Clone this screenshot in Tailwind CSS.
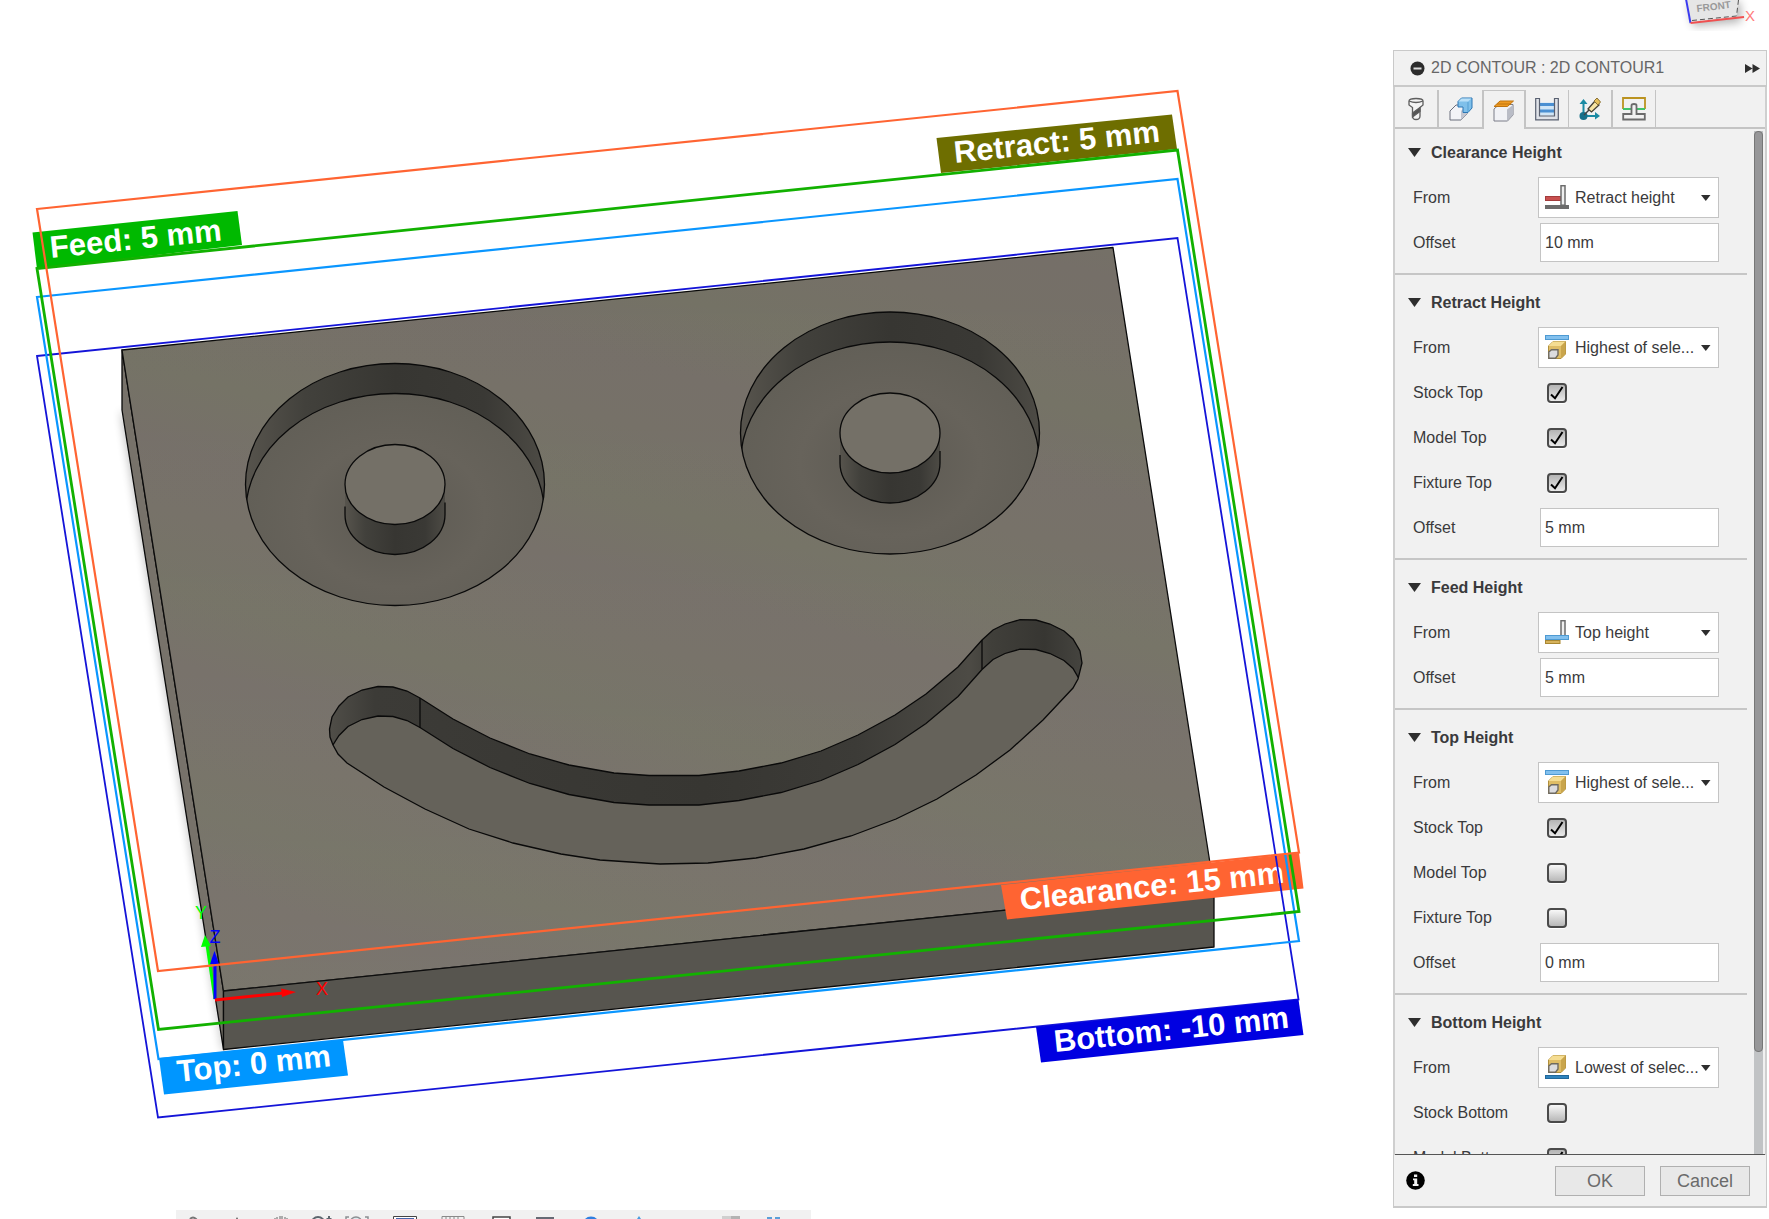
<!DOCTYPE html>
<html lang="en">
<head>
<meta charset="utf-8">
<title>2D Contour</title>
<script src="https://cdn.jsdelivr.net/npm/@tailwindcss/browser@4"></script>
</head>
<body class="bg-white font-['Liberation_Sans',Arial,sans-serif] text-base text-[#3a3a3c]">

<!-- shared icons -->
<svg class="hidden" aria-hidden="true">
  <symbol id="i-retract" viewBox="0 0 24 24">
    <rect x="0.5" y="11.5" width="15" height="4" fill="#c9504f" stroke="#a33c3c"/>
    <rect x="16" y="0.7" width="4" height="19.5" fill="#efefef" stroke="#6c6c6c" stroke-width="1.5"/>
    <rect x="0" y="20" width="24" height="4" fill="#6b6b6b"/>
  </symbol>
  <symbol id="i-top" viewBox="0 0 24 24">
    <rect x="16" y="0.7" width="4" height="16" fill="#efefef" stroke="#6c6c6c" stroke-width="1.5"/>
    <rect x="0.5" y="15.5" width="23" height="4" fill="#82c0ee" stroke="#4e9ad2"/>
    <rect x="0.5" y="20.5" width="14.5" height="3" fill="#d6b25c" stroke="#a98731"/>
  </symbol>
  <symbol id="i-block" viewBox="0 0 18 18">
    <path d="M0.5 5 L5 0.5 H17.5 V13 L13 17.5 H0.5Z" fill="#dfbd66" stroke="#b08f3c"/>
    <path d="M0.5 5 L5 0.5 H17.5 L13 5Z" fill="#f5dd92"/>
    <path d="M13 5 L17.5 0.5 V13 L13 17.5Z" fill="#c9a54c"/>
    <path d="M0.8 11 L3.5 8.7 H10 V14 L7.5 17.2 H0.8Z" fill="#dcdcdf" stroke="#6f6a60" stroke-width="1.4"/>
  </symbol>
  <symbol id="i-highest" viewBox="0 0 24 24">
    <rect x="0.5" y="0.5" width="23" height="4" fill="#82c0ee" stroke="#4e9ad2"/>
    <use href="#i-block" x="3" y="6" width="18" height="18"/>
  </symbol>
  <symbol id="i-lowest" viewBox="0 0 24 24">
    <use href="#i-block" x="3" y="0" width="18" height="18"/>
    <rect x="0.5" y="20.5" width="23" height="3" fill="#2f83bd" stroke="#20689b"/>
  </symbol>
  <symbol id="i-check" viewBox="0 0 20 20">
    <path d="M4 11.5 L8 15.2 L15.5 4" fill="none" stroke="#000" stroke-width="2"/>
  </symbol>
  <symbol id="i-caret" viewBox="0 0 10 6"><path d="M0 0 H9.5 L4.8 6Z" fill="#2e2e2e"/></symbol>
  <symbol id="i-fold" viewBox="0 0 13 9"><path d="M0 0 H13 L6.5 9Z" fill="#2e2e2e"/></symbol>
</svg>

<div class="flex h-screen overflow-hidden">

  <!-- modelling canvas -->
  <main class="flex min-w-0 flex-1 flex-col">
    <svg class="block min-h-0 w-full flex-1" viewBox="0 0 1393 1210" preserveAspectRatio="xMinYMin meet" role="img" aria-label="Stock with height planes">
      <defs>
        <linearGradient id="band" gradientUnits="userSpaceOnUse" x1="60" y1="200" x2="4" y2="400" spreadMethod="repeat">
          <stop offset="0" stop-color="#756f68"/><stop offset=".3" stop-color="#757067"/>
          <stop offset=".65" stop-color="#747265"/><stop offset="1" stop-color="#756f68"/>
        </linearGradient>
        <linearGradient id="lift" x1="0" y1="0" x2="0" y2="1">
          <stop offset="0" stop-color="#fff" stop-opacity="0"/><stop offset="1" stop-color="#fff" stop-opacity=".04"/>
        </linearGradient>
        <linearGradient id="wall" x1="0" y1="0" x2="1" y2="0">
          <stop offset="0" stop-color="#57544d"/><stop offset=".2" stop-color="#42413c"/><stop offset=".5" stop-color="#373632"/>
          <stop offset=".8" stop-color="#3a3935"/><stop offset="1" stop-color="#4d4b45"/>
        </linearGradient>
        <linearGradient id="groove" x1="0" y1="0" x2="1" y2="0">
          <stop offset="0" stop-color="#504e48"/><stop offset=".06" stop-color="#3c3b37"/><stop offset=".5" stop-color="#373632"/>
          <stop offset=".7" stop-color="#3c3b37"/><stop offset=".85" stop-color="#4d4b45"/><stop offset=".88" stop-color="#403f3a"/><stop offset=".95" stop-color="#373632"/><stop offset="1" stop-color="#45443f"/>
        </linearGradient>
        <radialGradient id="floor"><stop offset="0" stop-color="#5c5952"/><stop offset=".6" stop-color="#67635b"/><stop offset="1" stop-color="#625f57"/></radialGradient>
        <filter id="soft" x="-20%" y="-20%" width="140%" height="140%"><feGaussianBlur stdDeviation="5"/></filter>
        <ellipse id="rim" cx="0" cy="0" rx="149.5" ry="121"/>
        <clipPath id="rimClip"><use href="#rim"/></clipPath>
        <path id="smile" d="M420 698 L407 691 L393 687 L378 686.500 L362 690 L348 697 L339 706 L332 717 L329.500 729 L330 737 L333 745 L338 754 L347 763 L384 787 L425 809 L469 829 L513 843 L561 854 L600 860 L660 864 L708 863 L756 858 L804 849 L851 836 L896 819 L937 799 L976 775 L1010 750 L1043 720 L1073 688 L1078 679 L1082 663 L1080 651 L1073 639 L1064 631 L1050 624 L1036 620 L1020 619.700 L1005 624 L993 630 L982 640 L958 667 L926 694 L895 715 L858 735 L821 751 L781 763 L739 771 L699 775.500 L649 775.500 L614 773 L569 765 L530 754 L490 738 L453 719 Z"/>
        <clipPath id="smileClip"><use href="#smile"/></clipPath>
        <g id="eye">
          <use href="#rim" fill="url(#wall)"/>
          <g clip-path="url(#rimClip)"><use href="#rim" y="30" fill="url(#floor)" stroke="#0a0a0a" stroke-width="1.3"/></g>
          <use href="#rim" fill="none" stroke="#0a0a0a" stroke-width="1.3"/>
          <path d="M-50 5 V30 A50 40 0 0 0 50 30 V5Z" fill="url(#wall)" />
          <path d="M-50 22 V30 A50 40 0 0 0 50 30 V18" fill="none" stroke="#0a0a0a" stroke-width="1.3"/>
          <ellipse rx="50" ry="40" fill="#747067" stroke="#0a0a0a" stroke-width="1.3"/>
        </g>
      </defs>

      <!-- stock body -->
      <path d="M121 410 L223 1050 L228 1050 L130 420Z" fill="#000" opacity=".3" filter="url(#soft)"/>
      <g stroke="#0a0a0a" stroke-width="1.3" stroke-linejoin="round">
        <path d="M122 350 L223.500 991 V1049.500 L122 410Z" fill="#77726a"/>
        <path d="M122 350 L1113 247.500 L1214 888.500 L223.500 991Z" fill="url(#band)"/>
        <path d="M223.500 991 L1214 888.500 V947 L223.500 1049.500Z" fill="#57554f"/>
      </g>
      <path d="M122 350 L1113 247.500 L1214 888.500 L223.500 991Z" fill="url(#lift)"/>

      <use href="#eye" x="395" y="484.500"/>
      <use href="#eye" x="890" y="433"/>

      <use href="#smile" fill="url(#groove)"/>
      <g clip-path="url(#smileClip)"><use href="#smile" y="29.500" fill="#65625a" stroke="#0a0a0a" stroke-width="1.3"/></g>
      <use href="#smile" fill="none" stroke="#0a0a0a" stroke-width="1.3"/>
      <path d="M420 698 V728 M982 640 V669" stroke="#0a0a0a" stroke-width="1.300"/>

      <!-- origin triad -->
      <g stroke-width="3" fill="none">
        <path d="M215 999 L207 945" stroke="#0f0"/><path d="M201 947 L205 935 L211 946Z" fill="#0f0" stroke="none"/>
        <path d="M215 999 V962" stroke="#00f"/><path d="M210 964 L214.500 951 L219 964Z" fill="#00f" stroke="none"/>
        <path d="M215 1000 L284 993" stroke="#f00"/><path d="M281 988.500 L296 992 L282 997Z" fill="#f00" stroke="none"/>
      </g>
      <g font-size="18" text-anchor="middle">
        <text x="201" y="919" fill="#0f0">Y</text><text x="215" y="943" fill="#00f">Z</text><text x="322" y="995" fill="#f00">X</text>
      </g>

      <!-- height planes and their tags -->
      <g font-size="31" font-weight="700" fill="#fff">
        <path d="M1001 885 L1299 853 L1303.500 888.500 L1007 919.500Z" fill="#ff6432"/>
        <text transform="translate(1021 910) rotate(-5.900)">Clearance: 15 mm</text>
        <path d="M37 356 L1177.500 238 L1298.500 999.500 L158 1117.500Z" fill="none" stroke="#1414d8" stroke-width="1.800"/>
        <path d="M1036 1027 L1298.500 999.500 L1303.500 1035 L1041 1062.500Z" fill="#0000e1"/>
        <text transform="translate(1055 1052) rotate(-5.900)">Bottom: -10 mm</text>
        <path d="M37 297 L1177.500 179 L1299 941 L158.500 1059Z" fill="none" stroke="#0a96ff" stroke-width="2.200"/>
        <path d="M159 1058 L343 1040 L348 1075.500 L164 1094.500Z" fill="#0096ff"/>
        <text transform="translate(178 1082) rotate(-5.900)">Top: 0 mm</text>
        <path d="M936.500 138 L1172 114.500 L1177 149 L941 173Z" fill="#6e6e00"/>
        <text transform="translate(955 163) rotate(-5.900)">Retract: 5 mm</text>
        <path d="M32.500 232.500 L237.500 211 L242 245 L37 269Z" fill="#00b900"/>
        <text transform="translate(51 258) rotate(-5.900)">Feed: 5 mm</text>
        <path d="M37 268.500 L1177.500 150 L1299 911.500 L158.500 1029.500Z" fill="none" stroke="#12b100" stroke-width="2.800"/>
        <path d="M37 209 L1177.500 91 L1299 852.500 L158 971Z" fill="none" stroke="#ff6432" stroke-width="2.200"/>
      </g>
    </svg>

    <!-- navigation bar -->
    <nav aria-label="Navigation" class="ml-[176px] flex h-[9px] w-[635px] shrink-0 items-start overflow-hidden bg-[#f1f1f1] pl-[5px] pt-1.5">
      <button aria-label="Home" class="h-6 w-6 shrink-0"><svg viewBox="0 0 24 24" class="h-6 w-6" fill="none" stroke="#777" stroke-width="2"><path d="M9 3 Q12 0 15 3 L20 9"/></svg></button>
      <button aria-label="Orbit" class="ml-5 h-6 w-6 shrink-0"><svg viewBox="0 0 24 24" class="h-6 w-6"><path d="M12 1 L14 5 H10Z" fill="#555"/></svg></button>
      <button aria-label="Pan" class="ml-5 h-6 w-6 shrink-0"><svg viewBox="0 0 24 24" class="h-6 w-6" fill="none" stroke="#666"><path d="M6 6 V2 M8 6 V1 M11 6 V0 M13 6 V0 M16 6 V1 M18 6 V2"/></svg></button>
      <button aria-label="Zoom" class="ml-4 h-6 w-6 shrink-0"><svg viewBox="0 0 24 24" class="h-6 w-6" fill="none" stroke="#5d666e" stroke-width="2"><circle cx="9" cy="7.500" r="6.500"/><path d="M20 0 V8 M17.500 3 H22.500"/></svg></button>
      <button aria-label="Fit" class="ml-3 h-6 w-6 shrink-0"><svg viewBox="0 0 24 24" class="h-6 w-6" fill="none" stroke="#8b8f92" stroke-width="1.500"><path d="M1 5 V1 H4 M20 1 H23 V5"/><circle cx="11" cy="7" r="6" fill="#dce8ec"/></svg></button>
      <button aria-label="Display" class="ml-6 h-6 w-6 shrink-0"><svg viewBox="0 0 24 24" class="h-6 w-6"><path d="M.5 .5 H23.500 V16 H.5Z" fill="#fff" stroke="#444"/><rect x="3" y="2" width="18" height="12" fill="#4667ad"/></svg></button>
      <button aria-label="Grid" class="ml-6 h-6 w-6 shrink-0"><svg viewBox="0 0 24 24" class="h-6 w-6" fill="none" stroke="#8a8a8a"><path d="M1 .5 H23 V16 H1Z M5 0 V16 M9 0 V16 M13 0 V16 M17 0 V16"/></svg></button>
      <button aria-label="Viewports" class="ml-6 h-6 w-6 shrink-0"><svg viewBox="0 0 24 24" class="h-6 w-6" fill="#fff" stroke="#444" stroke-width="1.500"><path d="M4 1 H21 V16 H4Z"/></svg></button>
      <button aria-label="Layout" class="ml-5 h-6 w-6 shrink-0"><svg viewBox="0 0 24 24" class="h-6 w-6"><rect x="3" y="1" width="18" height="14" fill="#666b75"/></svg></button>
      <button aria-label="Simulate" class="ml-[22px] h-6 w-6 shrink-0"><svg viewBox="0 0 24 24" class="h-6 w-6"><circle cx="12" cy="9" r="8.500" fill="#2f7fe0"/></svg></button>
      <button aria-label="Drop" class="ml-6 h-6 w-6 shrink-0"><svg viewBox="0 0 24 24" class="h-6 w-6"><path d="M12 0 L16 6 H8Z" fill="#4a9be0"/></svg></button>
      <button aria-label="Material" class="ml-[68px] h-6 w-6 shrink-0"><svg viewBox="0 0 24 24" class="h-6 w-6"><rect x="3" width="9" height="9" fill="#cfcfcf"/><rect x="12" width="9" height="9" fill="#b3b3b3"/></svg></button>
      <button aria-label="More" class="ml-[18px] h-6 w-6 shrink-0"><svg viewBox="0 0 24 24" class="h-6 w-6"><path d="M6 1 H11 V4 H6Z M14 1 H19 V4 H14Z" fill="#5c9fd8"/></svg></button>
    </nav>
  </main>

  <!-- right column: view cube above the operation dialog -->
  <div class="mr-0.5 flex w-[374px] shrink-0 flex-col pb-[11px]">
    <div class="flex h-[50px] shrink-0 justify-end">
      <svg class="h-[50px] w-[100px]" viewBox="0 0 100 50" role="img" aria-label="View cube, front">
        <path d="M21 2 L26 26 L74 22 L73 2Z" fill="#000" opacity=".3" filter="url(#soft)"/>
        <path d="M19 0 L23.500 23 L69.500 17 L71.500 0Z" fill="#e6e6e6"/>
        <path d="M25 20.500 L69.500 16 L71.500 0" fill="none" stroke="#555" stroke-dasharray="5 3"/>
        <path d="M19 -1 L23.500 23" stroke="#3a3af0" stroke-width="2"/>
        <path d="M23.500 23 L77 17" stroke="#f05050" stroke-width="2"/>
        <text transform="translate(30 12) rotate(-7)" font-size="10" font-weight="700" fill="#999">FRONT</text>
        <text x="78" y="21" font-size="15" fill="#ff7b7b">X</text>
      </svg>
    </div>

    <aside class="flex min-h-0 flex-1 flex-col bg-[#f1f1f1]">
      <header class="flex h-[37px] shrink-0 items-center border-x border-t border-b-2 border-[#c9c9c9] pl-4 pr-1.5">
        <button aria-label="Collapse" class="h-[15px] w-[15px]"><svg viewBox="0 0 15 15" class="h-[15px] w-[15px]"><circle cx="7.500" cy="7.500" r="7" fill="#2c2c2c"/><path d="M3.500 7.500 H11.500" stroke="#ddd" stroke-width="2"/></svg></button>
        <h1 class="ml-1.5 flex-1 text-[#666]">2D CONTOUR : 2D CONTOUR1</h1>
        <button aria-label="Dock" class="h-[9px] w-[15px]"><svg viewBox="0 0 15 9" class="h-[9px] w-[15px]"><path d="M0 0 L7.500 4.500 L0 9Z M7.500 0 L15 4.500 L7.500 9Z" fill="#2e2e2e"/></svg></button>
      </header>

      <div class="flex min-h-0 flex-1 flex-col border-x-2 border-[#cfcfcf]">
        <div role="tablist" class="flex h-[42px] shrink-0 items-stretch pt-[3px]">
          <button role="tab" aria-label="Tool" class="flex w-11 items-center justify-center border-r-2 border-b-2 border-[#c4c4c4]">
            <svg class="h-6 w-6" viewBox="0 0 24 24" stroke="#5e5e5e" stroke-width="1.300">
              <path d="M5 4 Q5 1.500 12 1.500 Q19 1.500 19 4 V8 L16 10.500 V19 Q16 22.500 12 22.500 Q8.500 22.500 8.500 19 V10.500 L5 8Z" fill="#f4f4f4"/>
              <path d="M5 4 Q12 7 19 4" fill="none"/><path d="M8.500 16 L16 10.500 V14.500 L8.500 20Z" fill="#555"/></svg>
          </button>
          <button role="tab" aria-label="Geometry" class="flex w-[43px] items-center justify-center border-b-2 border-[#c4c4c4]">
            <svg class="h-6 w-6" viewBox="0 0 24 24">
              <path d="M1 14 L7 8 H18 V17 L12 23 H1Z" fill="#f2f3f7" stroke="#6a6e7c"/><path d="M12 14 L18 8 V17 L12 23Z" fill="#c3c6d0"/>
              <path d="M9 4.500 L12.500 1 H23 V11 L19 15.500 H14 V10 H9Z" fill="#7fc0ea" stroke="#2c77b4"/><path d="M9.500 4.500 L12.500 1.500 H22.500 L19 4.500Z" fill="#b9e0f8"/><path d="M19 5 V15" stroke="#559fd2"/></svg>
          </button>
          <button role="tab" aria-label="Heights" aria-selected="true" class="flex w-11 items-center justify-center border-x-2 border-t border-[#c4c4c4]">
            <svg class="h-6 w-6" viewBox="0 0 24 24">
              <path d="M2 11 L7 6.500 H21 V17 L15.500 23 H2Z" fill="#f1f2f6" stroke="#7a7d88"/><path d="M15 11.500 L21 7 V17 L15 23Z" fill="#b9bcc6"/>
              <path d="M2 8.500 L8 3 H21.500 L15.500 8.500Z" fill="#ee9a22" stroke="#bf7410"/><path d="M5 6 H19" stroke="#bf7410"/></svg>
          </button>
          <button role="tab" aria-label="Passes" class="flex w-[43px] items-center justify-center border-r border-b-2 border-[#c4c4c4]">
            <svg class="h-6 w-6" viewBox="0 0 24 24">
              <rect x="5" y="5.500" width="14" height="13" fill="#cfe5f7"/><path d="M5 7.500 H19 M5 14 H19" stroke="#4a8fd2" stroke-width="3"/>
              <path d="M.7 1.500 H4.500 V19 H19.500 V1.500 H23.300 V22.800 H.7Z" fill="#dfe2e8" stroke="#596070" stroke-width="1.200"/></svg>
          </button>
          <button role="tab" aria-label="Linking" class="flex w-11 items-center justify-center border-r-2 border-b-2 border-[#c4c4c4]">
            <svg class="h-6 w-6" viewBox="0 0 24 24">
              <path d="M5.500 19 V6 M5.500 19 H18" stroke="#1b8aa3" stroke-width="2"/><path d="M1.500 7 L5.500 2 L9.500 7Z M17 15 L22 19 L17 22.500Z" fill="#1b8aa3"/>
              <circle cx="5.500" cy="19" r="4" fill="#17708a"/><path d="M6 18 L12 12" stroke="#444" stroke-width="1.500"/>
              <path d="M10 12 L17 4 L21 8 L13.500 15Z" fill="#f6e3a2" stroke="#443f35" stroke-width="1.300"/><path d="M16 4 L19 1 L22.500 5 L20 8Z" fill="#e6c05c" stroke="#8a7134"/></svg>
          </button>
          <button role="tab" aria-label="Leads" class="flex w-[43px] items-center justify-center border-r border-b-2 border-[#c4c4c4]">
            <svg class="h-6 w-6" viewBox="0 0 24 24" fill="none" stroke-width="1.800">
              <path d="M1 12 V1 H23 V12" stroke="#bb9320"/><path d="M1 12 H9 M15 12 H23" stroke="#3fc46a"/>
              <path d="M1.200 17 H9.500 V8.500 Q9.500 7 12 7 Q14.500 7 14.500 8.500 V17 H22.800 V22.500 H1.200Z" stroke="#6b6b6b" fill="#f1f1f1"/></svg>
          </button>
          <div class="flex-1 border-b-2 border-[#c4c4c4]"></div>
        </div>

        <div class="flex min-h-0 flex-1 border-b border-[#555]">
          <form class="min-w-0 flex-1 overflow-hidden pt-px">

            <section class="mr-[7px] mb-[5px] border-b-2 border-[#c6c6c6] pb-2">
              <h2 class="flex h-[45px] items-center gap-2.5 pl-[13px] font-bold"><svg class="h-[9px] w-[13px]"><use href="#i-fold"/></svg>Clearance Height</h2>
              <div class="flex h-[45px] items-center pl-[18px]"><label for="c-from" class="w-[125px]">From</label>
                <div class="relative"><select id="c-from" class="h-[41px] w-[181px] appearance-none overflow-hidden border border-[#c4c4c4] bg-white pr-5 pl-9 text-clip whitespace-nowrap"><option>Retract height</option></select>
                  <svg class="pointer-events-none absolute top-2 left-[7px] h-6 w-6"><use href="#i-retract"/></svg><svg class="pointer-events-none absolute top-[18px] right-2 h-1.5 w-2.5"><use href="#i-caret"/></svg></div></div>
              <div class="flex h-[45px] items-center pl-[18px]"><label for="c-off" class="w-[127px]">Offset</label><input id="c-off" value="10 mm" class="h-[39px] w-[179px] border border-[#c4c4c4] bg-white px-1"></div>
            </section>

            <section class="mr-[7px] mb-[5px] border-b-2 border-[#c6c6c6] pb-2">
              <h2 class="flex h-[45px] items-center gap-2.5 pl-[13px] font-bold"><svg class="h-[9px] w-[13px]"><use href="#i-fold"/></svg>Retract Height</h2>
              <div class="flex h-[45px] items-center pl-[18px]"><label for="r-from" class="w-[125px]">From</label>
                <div class="relative"><select id="r-from" class="h-[41px] w-[181px] appearance-none overflow-hidden border border-[#c4c4c4] bg-white pr-5 pl-9 text-clip whitespace-nowrap"><option>Highest of sele...</option></select>
                  <svg class="pointer-events-none absolute top-2 left-[7px] h-6 w-6"><use href="#i-highest"/></svg><svg class="pointer-events-none absolute top-[18px] right-2 h-1.5 w-2.5"><use href="#i-caret"/></svg></div></div>
              <div class="flex h-[45px] items-center pl-[18px]"><label for="r-stock" class="w-[134px]">Stock Top</label><div class="relative h-5 w-5"><input id="r-stock" type="checkbox" checked class="peer block h-5 w-5 appearance-none rounded-[4px] border-2 border-[#4a4a4a] bg-linear-to-b from-[#f8f8f8] to-[#b8b8b8] shadow-[0_1px_0_#fff] checked:from-[#b4b4b4] checked:to-[#eaeaea]"><svg class="pointer-events-none absolute inset-0 hidden h-5 w-5 peer-checked:block"><use href="#i-check"/></svg></div></div>
              <div class="flex h-[45px] items-center pl-[18px]"><label for="r-model" class="w-[134px]">Model Top</label><div class="relative h-5 w-5"><input id="r-model" type="checkbox" checked class="peer block h-5 w-5 appearance-none rounded-[4px] border-2 border-[#4a4a4a] bg-linear-to-b from-[#f8f8f8] to-[#b8b8b8] shadow-[0_1px_0_#fff] checked:from-[#b4b4b4] checked:to-[#eaeaea]"><svg class="pointer-events-none absolute inset-0 hidden h-5 w-5 peer-checked:block"><use href="#i-check"/></svg></div></div>
              <div class="flex h-[45px] items-center pl-[18px]"><label for="r-fix" class="w-[134px]">Fixture Top</label><div class="relative h-5 w-5"><input id="r-fix" type="checkbox" checked class="peer block h-5 w-5 appearance-none rounded-[4px] border-2 border-[#4a4a4a] bg-linear-to-b from-[#f8f8f8] to-[#b8b8b8] shadow-[0_1px_0_#fff] checked:from-[#b4b4b4] checked:to-[#eaeaea]"><svg class="pointer-events-none absolute inset-0 hidden h-5 w-5 peer-checked:block"><use href="#i-check"/></svg></div></div>
              <div class="flex h-[45px] items-center pl-[18px]"><label for="r-off" class="w-[127px]">Offset</label><input id="r-off" value="5 mm" class="h-[39px] w-[179px] border border-[#c4c4c4] bg-white px-1"></div>
            </section>

            <section class="mr-[7px] mb-[5px] border-b-2 border-[#c6c6c6] pb-2">
              <h2 class="flex h-[45px] items-center gap-2.5 pl-[13px] font-bold"><svg class="h-[9px] w-[13px]"><use href="#i-fold"/></svg>Feed Height</h2>
              <div class="flex h-[45px] items-center pl-[18px]"><label for="f-from" class="w-[125px]">From</label>
                <div class="relative"><select id="f-from" class="h-[41px] w-[181px] appearance-none overflow-hidden border border-[#c4c4c4] bg-white pr-5 pl-9 text-clip whitespace-nowrap"><option>Top height</option></select>
                  <svg class="pointer-events-none absolute top-2 left-[7px] h-6 w-6"><use href="#i-top"/></svg><svg class="pointer-events-none absolute top-[18px] right-2 h-1.5 w-2.5"><use href="#i-caret"/></svg></div></div>
              <div class="flex h-[45px] items-center pl-[18px]"><label for="f-off" class="w-[127px]">Offset</label><input id="f-off" value="5 mm" class="h-[39px] w-[179px] border border-[#c4c4c4] bg-white px-1"></div>
            </section>

            <section class="mr-[7px] mb-[5px] border-b-2 border-[#c6c6c6] pb-2">
              <h2 class="flex h-[45px] items-center gap-2.5 pl-[13px] font-bold"><svg class="h-[9px] w-[13px]"><use href="#i-fold"/></svg>Top Height</h2>
              <div class="flex h-[45px] items-center pl-[18px]"><label for="t-from" class="w-[125px]">From</label>
                <div class="relative"><select id="t-from" class="h-[41px] w-[181px] appearance-none overflow-hidden border border-[#c4c4c4] bg-white pr-5 pl-9 text-clip whitespace-nowrap"><option>Highest of sele...</option></select>
                  <svg class="pointer-events-none absolute top-2 left-[7px] h-6 w-6"><use href="#i-highest"/></svg><svg class="pointer-events-none absolute top-[18px] right-2 h-1.5 w-2.5"><use href="#i-caret"/></svg></div></div>
              <div class="flex h-[45px] items-center pl-[18px]"><label for="t-stock" class="w-[134px]">Stock Top</label><div class="relative h-5 w-5"><input id="t-stock" type="checkbox" checked class="peer block h-5 w-5 appearance-none rounded-[4px] border-2 border-[#4a4a4a] bg-linear-to-b from-[#f8f8f8] to-[#b8b8b8] shadow-[0_1px_0_#fff] checked:from-[#b4b4b4] checked:to-[#eaeaea]"><svg class="pointer-events-none absolute inset-0 hidden h-5 w-5 peer-checked:block"><use href="#i-check"/></svg></div></div>
              <div class="flex h-[45px] items-center pl-[18px]"><label for="t-model" class="w-[134px]">Model Top</label><input id="t-model" type="checkbox" class="block h-5 w-5 appearance-none rounded-[4px] border-2 border-[#4a4a4a] bg-linear-to-b from-[#f8f8f8] to-[#b8b8b8] shadow-[0_1px_0_#fff]"></div>
              <div class="flex h-[45px] items-center pl-[18px]"><label for="t-fix" class="w-[134px]">Fixture Top</label><input id="t-fix" type="checkbox" class="block h-5 w-5 appearance-none rounded-[4px] border-2 border-[#4a4a4a] bg-linear-to-b from-[#f8f8f8] to-[#b8b8b8] shadow-[0_1px_0_#fff]"></div>
              <div class="flex h-[45px] items-center pl-[18px]"><label for="t-off" class="w-[127px]">Offset</label><input id="t-off" value="0 mm" class="h-[39px] w-[179px] border border-[#c4c4c4] bg-white px-1"></div>
            </section>

            <section class="mr-[7px]">
              <h2 class="flex h-[45px] items-center gap-2.5 pl-[13px] font-bold"><svg class="h-[9px] w-[13px]"><use href="#i-fold"/></svg>Bottom Height</h2>
              <div class="flex h-[45px] items-center pl-[18px]"><label for="b-from" class="w-[125px]">From</label>
                <div class="relative"><select id="b-from" class="h-[41px] w-[181px] appearance-none overflow-hidden border border-[#c4c4c4] bg-white pr-5 pl-9 text-clip whitespace-nowrap"><option>Lowest of selec...</option></select>
                  <svg class="pointer-events-none absolute top-2 left-[7px] h-6 w-6"><use href="#i-lowest"/></svg><svg class="pointer-events-none absolute top-[18px] right-2 h-1.5 w-2.5"><use href="#i-caret"/></svg></div></div>
              <div class="flex h-[45px] items-center pl-[18px]"><label for="b-stock" class="w-[134px]">Stock Bottom</label><input id="b-stock" type="checkbox" class="block h-5 w-5 appearance-none rounded-[4px] border-2 border-[#4a4a4a] bg-linear-to-b from-[#f8f8f8] to-[#b8b8b8] shadow-[0_1px_0_#fff]"></div>
              <div class="flex h-[45px] items-center pl-[18px]"><label for="b-model" class="w-[134px]">Model Bottom</label><div class="relative h-5 w-5"><input id="b-model" type="checkbox" checked class="peer block h-5 w-5 appearance-none rounded-[4px] border-2 border-[#4a4a4a] bg-linear-to-b from-[#f8f8f8] to-[#b8b8b8] shadow-[0_1px_0_#fff] checked:from-[#b4b4b4] checked:to-[#eaeaea]"><svg class="pointer-events-none absolute inset-0 hidden h-5 w-5 peer-checked:block"><use href="#i-check"/></svg></div></div>
            </section>
          </form>

          <!-- scroll track and thumb -->
          <div class="mt-0.5 mr-0.5 w-[9px] shrink-0 bg-[#c1c3c5]"><div class="h-[90%] rounded-[4px] border border-[#777] bg-[#979799]"></div></div>
        </div>
      </div>

      <footer class="flex h-[53px] shrink-0 items-center gap-[15px] border-x border-b-2 border-[#c9c9c9] pr-4 pl-3">
        <button aria-label="Info" class="mr-auto h-[19px] w-[19px]"><svg viewBox="0 0 19 19" class="h-[19px] w-[19px]"><circle cx="9.500" cy="9.500" r="9.300" fill="#000"/><path d="M8 3.500 H11.200 V6 H8Z M7 7.500 H11.200 V13 H12.500 V15 H6.800 V13 H8.200 V9.300 H7Z" fill="#f1f1f1"/></svg></button>
        <button class="h-[30px] w-[90px] border border-[#b0b0b0] bg-[#e8e8e8] text-lg leading-none text-[#6b6b6b]">OK</button>
        <button class="h-[30px] w-[90px] border border-[#b0b0b0] bg-[#e8e8e8] text-lg leading-none text-[#6b6b6b]">Cancel</button>
      </footer>
    </aside>
  </div>
</div>
</body>
</html>
